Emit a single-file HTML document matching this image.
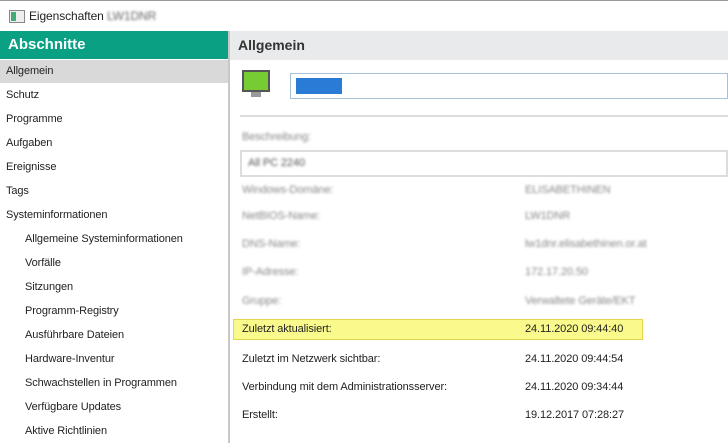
<!DOCTYPE html><html><head><style>
body{margin:0;width:728px;height:443px;overflow:hidden;background:#fff;font-family:"Liberation Sans",sans-serif;font-size:11px;letter-spacing:-0.1px;color:#222;position:relative}
.a{position:absolute;white-space:nowrap}
.blur{color:#888;filter:blur(1.2px)}
.side div{position:absolute;left:6px;height:24px;line-height:24px}
</style></head><body>
<div class="a" style="left:0;top:0;width:728px;height:31px;background:#fff;border-top:1px solid #999"></div>
<div class="a" style="left:9px;top:10px;width:14px;height:11px;border:1px solid #888;background:#eee"><div style="width:5px;height:9px;background:#4a7;margin:1px"></div></div>
<div class="a" style="left:29px;top:9px;font-size:12px">Eigenschaften <span class="blur" style="color:#666">LW1DNR</span></div>
<div class="a" style="left:0;top:31px;width:228px;height:28px;background:#0aa084"></div>
<div class="a" style="left:8px;top:36px;color:#fff;font-weight:bold;font-size:15px;letter-spacing:0">Abschnitte</div>
<div class="a" style="left:228px;top:31px;width:2px;height:412px;background:#c8c8c8"></div>
<div class="a" style="left:230px;top:31px;width:498px;height:29px;background:#e8eaeb"></div>
<div class="a" style="left:238px;top:37px;font-weight:bold;font-size:14px;letter-spacing:0;color:#333">Allgemein</div>
<div class="a" style="left:0;top:60px;width:228px;height:23px;background:#d9d9d9"></div>
<div class="side">
<div style="top:59px">Allgemein</div><div style="top:83px">Schutz</div><div style="top:107px">Programme</div><div style="top:131px">Aufgaben</div><div style="top:155px">Ereignisse</div><div style="top:179px">Tags</div><div style="top:203px">Systeminformationen</div>
<div style="top:227px;left:25px">Allgemeine Systeminformationen</div><div style="top:251px;left:25px">Vorfälle</div><div style="top:275px;left:25px">Sitzungen</div><div style="top:299px;left:25px">Programm-Registry</div><div style="top:323px;left:25px">Ausführbare Dateien</div><div style="top:347px;left:25px">Hardware-Inventur</div><div style="top:371px;left:25px">Schwachstellen in Programmen</div><div style="top:395px;left:25px">Verfügbare Updates</div><div style="top:419px;left:25px">Aktive Richtlinien</div>
</div>
<div class="a" style="left:242px;top:70px;width:28px;height:22px;border:2px solid #555;box-sizing:border-box;background:#7c3"></div>
<div class="a" style="left:251px;top:92px;width:10px;height:5px;background:#999"></div>
<div class="a" style="left:290px;top:73px;width:438px;height:26px;border:1px solid #a8c0d8;box-sizing:border-box;background:#fff"></div>
<div class="a" style="left:296px;top:78px;width:46px;height:16px;background:#2a7bd6"></div>
<div class="a" style="left:240px;top:115px;width:488px;height:2px;background:#ddd"></div>
<div class="a blur" style="left:242px;top:131px">Beschreibung:</div>
<div class="a" style="left:240px;top:150px;width:488px;height:27px;border:2px solid #ddd;box-sizing:border-box"></div>
<div class="a blur" style="left:248px;top:157px;color:#555">All PC 2240</div>
<div class="a blur" style="left:242px;top:184px">Windows-Domäne:</div><div class="a blur" style="left:525px;top:184px">ELISABETHINEN</div>
<div class="a blur" style="left:242px;top:210px">NetBIOS-Name:</div><div class="a blur" style="left:525px;top:210px">LW1DNR</div>
<div class="a blur" style="left:242px;top:238px">DNS-Name:</div><div class="a blur" style="left:525px;top:238px">lw1dnr.elisabethinen.or.at</div>
<div class="a blur" style="left:242px;top:266px">IP-Adresse:</div><div class="a blur" style="left:525px;top:266px">172.17.20.50</div>
<div class="a blur" style="left:242px;top:295px">Gruppe:</div><div class="a blur" style="left:525px;top:295px">Verwaltete Geräte/EKT</div>
<div class="a" style="left:233px;top:319px;width:410px;height:21px;background:#fafa8c;border:1px solid #e6d44a;box-sizing:border-box"></div>
<div class="a" style="left:242px;top:323px">Zuletzt aktualisiert:</div><div class="a" style="left:525px;top:323px">24.11.2020 09:44:40</div>
<div class="a" style="left:242px;top:353px">Zuletzt im Netzwerk sichtbar:</div><div class="a" style="left:525px;top:353px">24.11.2020 09:44:54</div>
<div class="a" style="left:242px;top:381px">Verbindung mit dem Administrationsserver:</div><div class="a" style="left:525px;top:381px">24.11.2020 09:34:44</div>
<div class="a" style="left:242px;top:409px">Erstellt:</div><div class="a" style="left:525px;top:409px">19.12.2017 07:28:27</div>
</body></html>
